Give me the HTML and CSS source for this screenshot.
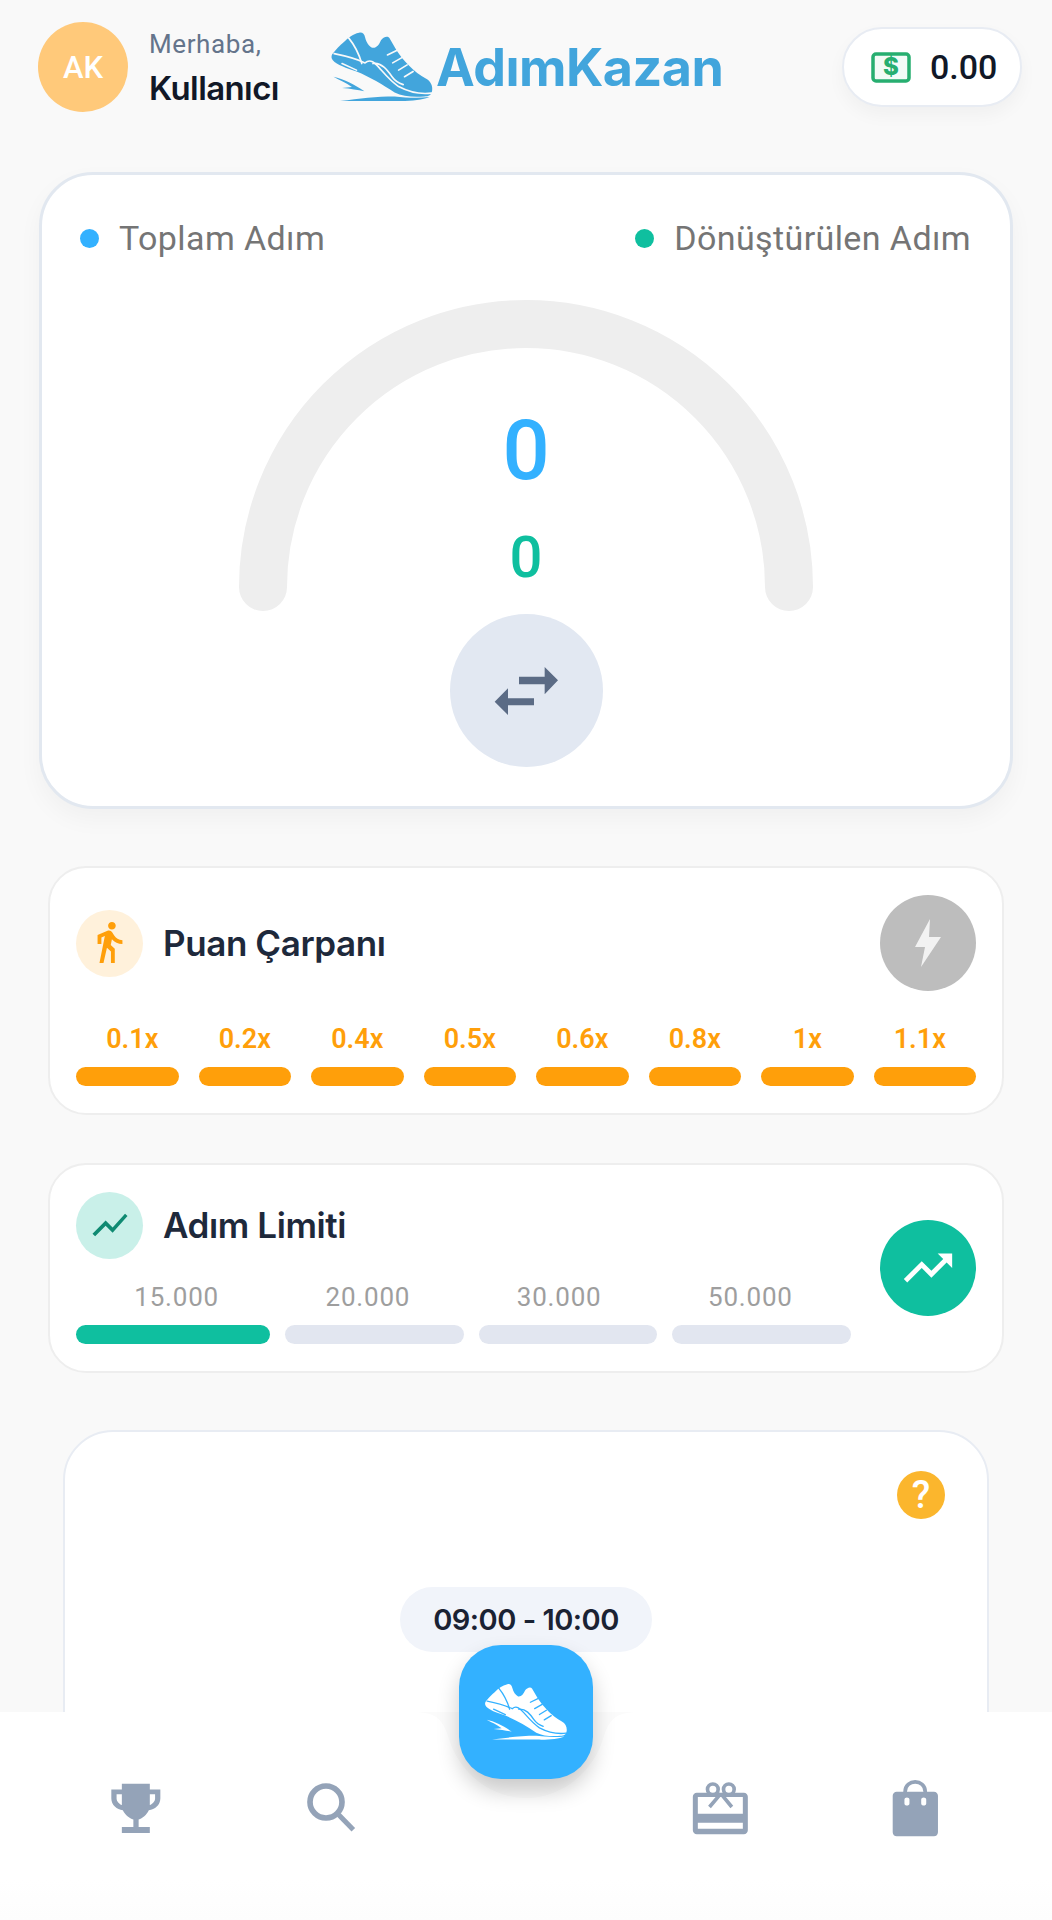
FILE: index.html
```html
<!DOCTYPE html>
<html lang="tr">
<head>
  <title>AdımKazan</title>
  <meta name="viewport" content="width=device-width, initial-scale=1">
  <link rel="stylesheet" href="styles.css">
</head>
<body>
  <svg class="defs" width="0" height="0">
    <symbol id="shoe" viewBox="30 30 315 225">
      <path class="shoe-body" d="M36 104 C48 88 60 76 70 68 C84 54 98 42 118 38 C128 36 134 42 136 52 C140 68 148 80 158 84 C170 86 178 76 184 62 C190 52 204 46 210 54 L232 92 C252 122 284 158 322 178 C336 186 342 200 340 214 C338 228 330 232 316 232 C280 234 250 232 226 220 C190 196 150 172 110 156 C80 146 50 136 38 122 C33 116 33 110 36 104 Z"/>
      <path class="shoe-body" d="M40 172 C70 178 104 196 134 216 C114 212 92 208 66 206 L96 203 C78 190 58 182 40 172 Z"/>
      <path class="shoe-body" d="M60 246 C120 238 170 232 226 232 C260 236 296 238 332 234 C310 244 270 247 230 246 C170 245 110 246 60 246 Z"/>
      <g class="shoe-seam">
        <path d="M86 54 C104 76 118 104 126 132"/>
        <path d="M42 102 C72 108 110 118 136 130 C152 116 166 130 180 146 C196 164 214 186 238 202 C268 218 304 226 338 222"/>
        <path d="M66 132 L110 152"/>
        <path d="M160 132 C186 128 204 152 218 172 C228 186 240 192 252 196"/>
        <path d="M204 106 L232 92"/>
        <path d="M220 130 L248 114"/>
        <path d="M238 152 L264 136"/>
        <path d="M256 172 L282 156"/>
      </g>
    </symbol>
  </svg>

  <div class="page">
    <header class="topbar">
      <div class="avatar">AK</div>
      <div class="greet">
        <div class="greet-hi">Merhaba,</div>
        <div class="greet-name">Kullanıcı</div>
      </div>
      <div class="brand">
        <svg class="brand-shoe" width="104" height="74"><use href="#shoe"/></svg>
        <span class="brand-name">AdımKazan</span>
      </div>
      <div class="wallet">
        <svg class="wallet-icon" width="40" height="31" viewBox="0 0 40 31">
          <rect x="2" y="2" width="36" height="27" rx="3" fill="#f3fbf7" stroke="#27ae70" stroke-width="3.500"/>
          <text x="20" y="23" text-anchor="middle" class="wallet-sign">$</text>
        </svg>
        <span class="wallet-value">0.00</span>
      </div>
    </header>

    <section class="steps-card">
      <div class="legend">
        <div class="legend-item"><span class="dot dot-blue"></span>Toplam Adım</div>
        <div class="legend-item"><span class="dot dot-green"></span>Dönüştürülen Adım</div>
      </div>
      <div class="gauge">
        <svg width="574" height="311" viewBox="0 0 574 311">
          <path d="M24 287 A263 263 0 0 1 550 287" fill="none" stroke="#eeeeee" stroke-width="48" stroke-linecap="round"/>
        </svg>
        <div class="gauge-total">0</div>
        <div class="gauge-converted">0</div>
      </div>
      <button class="convert-btn">
        <svg width="65" height="50" viewBox="40 45 195 150">
          <g fill="#5b6b85">
            <path d="M115 77 H192 V48 L232 88 L192 130 V100 H115 Z"/>
            <path d="M160 142 H82 V112 L42 152 L82 192 V163 H160 Z"/>
          </g>
        </svg>
      </button>
    </section>

    <section class="panel">
      <div class="panel-head">
        <div class="panel-title-wrap">
          <span class="panel-icon icon-orange">
            <svg width="36" height="44" viewBox="5 1 15 23"><path fill="#ff9f0a" d="M13.5 5.5c1.1 0 2-.9 2-2s-.9-2-2-2-2 .9-2 2 .9 2 2 2zM9.8 8.9L7 23h2.1l1.8-8 2.1 2v6h2v-7.5l-2.1-2 .6-3C14.8 12 16.8 13 19 13v-2c-1.9 0-3.5-1-4.3-2.4l-1-1.6c-.4-.6-1-1-1.7-1-.3 0-.5.1-.8.1L6 8.3V13h2V9.6l1.8-.7"/></svg>
          </span>
          <h2 class="panel-title">Puan Çarpanı</h2>
        </div>
        <span class="round-btn round-grey">
          <svg width="30" height="50" viewBox="0 0 30 50"><path fill="#f2f2f2" d="M17 1 L2 29 H12 L8 49 L28 19 H16 Z"/></svg>
        </span>
      </div>
      <div class="multipliers">
        <div class="mult"><span class="mult-label">0.1x</span><span class="mult-bar"></span></div>
        <div class="mult"><span class="mult-label">0.2x</span><span class="mult-bar"></span></div>
        <div class="mult"><span class="mult-label">0.4x</span><span class="mult-bar"></span></div>
        <div class="mult"><span class="mult-label">0.5x</span><span class="mult-bar"></span></div>
        <div class="mult"><span class="mult-label">0.6x</span><span class="mult-bar"></span></div>
        <div class="mult"><span class="mult-label">0.8x</span><span class="mult-bar"></span></div>
        <div class="mult"><span class="mult-label">1x</span><span class="mult-bar"></span></div>
        <div class="mult"><span class="mult-label">1.1x</span><span class="mult-bar"></span></div>
      </div>
    </section>

    <section class="panel panel-limit">
      <div class="limit-main">
        <div class="panel-title-wrap">
          <span class="panel-icon icon-teal">
            <svg width="42" height="42" viewBox="0 0 24 24"><path fill="#0f8a72" d="M3.5 18.49l6-6.01 4 4L22 6.92l-1.41-1.41-7.09 7.97-4-4L2 16.99z"/></svg>
          </span>
          <h2 class="panel-title">Adım Limiti</h2>
        </div>
        <div class="limit-labels">
          <span>15.000</span><span>20.000</span><span>30.000</span><span>50.000</span>
        </div>
        <div class="limit-bars">
          <span class="limit-bar limit-bar-on"></span>
          <span class="limit-bar"></span>
          <span class="limit-bar"></span>
          <span class="limit-bar"></span>
        </div>
      </div>
      <span class="round-btn round-green">
        <svg width="58" height="58" viewBox="0 0 24 24"><path fill="#fff" d="M16 6l2.29 2.29-4.88 4.88-4-4L2 16.59 3.41 18l6-6 4 4 6.3-6.29L22 12V6z"/></svg>
      </span>
    </section>

    <section class="slot-card">
      <div class="slot-top"><span class="help">?</span></div>
      <div class="slot-time">09:00 - 10:00</div>
    </section>
  </div>

  <nav class="bottom-nav">
    <svg class="nav-notch" width="228" height="86" viewBox="0 0 228 86"><path fill="#fbfbfb" d="M0 0 H228 C205 0 198 6 192 24 C182 60 150 86 114 86 C78 86 46 60 36 24 C30 6 23 0 0 0 Z"/></svg>
    <button class="fab">
      <svg class="fab-shoe" width="86" height="60"><use href="#shoe"/></svg>
    </button>
    <div class="nav-items">
      <span class="nav-item">
        <svg width="52" height="51" viewBox="45 38 156 155"><path fill="#94a3b8" fill-rule="evenodd" d="M80 40 H165 V58 H197 V85 C197 105 180 118 162 121 C155 135 143 146 131 149 V172 H165 V190 H80 V172 H115 V149 C103 146 90 135 83 121 C65 118 48 105 48 85 V58 H80 Z M64 72 V85 C64 94 72 102 80 105 V72 Z M181 72 H165 V105 C173 102 181 94 181 85 Z"/></svg>
      </span>
      <span class="nav-item">
        <svg width="50" height="50" viewBox="630 38 150 150" fill="none" stroke="#94a3b8"><circle cx="690" cy="95" r="48" stroke-width="17"/><path d="M728 133 L772 178" stroke-width="15"/></svg>
      </span>
      <span class="nav-item"></span>
      <span class="nav-item">
        <svg width="57" height="54" viewBox="38 30 170 162">
          <path fill="#94a3b8" fill-rule="evenodd" d="M52 65 H193 C200 65 205 70 205 77 V178 C205 185 200 190 193 190 H52 C45 190 40 185 40 178 V77 C40 70 45 65 52 65 Z M55 78 V128 H190 V78 Z M55 155 V173 H190 V155 Z"/>
          <g stroke="#94a3b8" stroke-width="11"><circle cx="100" cy="55" r="16" fill="#fff"/><circle cx="148" cy="55" r="16" fill="#fff"/><path fill="none" d="M124 68 L90 108 M124 68 L157 108"/></g>
        </svg>
      </span>
      <span class="nav-item">
        <svg width="47" height="57" viewBox="638 30 140 170">
          <path fill="none" stroke="#94a3b8" stroke-width="11" d="M677 75 V65 C677 26 737 26 737 65 V75"/>
          <path fill="#94a3b8" fill-rule="evenodd" d="M652 65 H763 C770 65 775 70 775 77 V186 C775 193 770 198 763 198 H652 C645 198 640 193 640 186 V77 C640 70 645 65 652 65 Z M675 88 V100 C675 108 690 108 690 100 V88 C690 80 675 80 675 88 Z M725 88 V100 C725 108 740 108 740 100 V88 C740 80 725 80 725 88 Z"/>
        </svg>
      </span>
    </div>
  </nav>
</body>
</html>
```

FILE: styles.css
```css
* {
  box-sizing: border-box;
}

html, body {
  margin: 0;
  padding: 0;
}

body {
  position: relative;
  width: 1052px;
  height: 1920px;
  overflow: hidden;
  background: #f9f9f9;
  font-family: Roboto, "Liberation Sans", sans-serif;
  color: #1a2233;
}

.defs {
  position: absolute;
}

/* top bar */
.topbar {
  display: flex;
  align-items: center;
  height: 134px;
  padding: 0 30px 0 38px;
}

.avatar {
  display: flex;
  align-items: center;
  justify-content: center;
  width: 90px;
  height: 90px;
  border-radius: 50%;
  background: #ffc97a;
  color: #fff;
  font-size: 31px;
  font-weight: 500;
}

.greet {
  margin-left: 21px;
  width: 132px;
}

.greet-hi {
  font-size: 26px;
  line-height: 36px;
  letter-spacing: 0.6px;
  color: #64748b;
}

.greet-name {
  margin-top: 6px;
  font-family: Inter, sans-serif;
  font-size: 33px;
  line-height: 40px;
  font-weight: 600;
  color: #111827;
  letter-spacing: -0.6px;
}

.brand {
  display: flex;
  align-items: center;
  margin-left: 49px;
}

.brand-shoe {
  --shoe-fill: #42a5dc;
  --shoe-seam: #f9f9f9;
}

.brand-name {
  margin-left: 2px;
  font-family: Inter, sans-serif;
  font-size: 52px;
  font-weight: 700;
  letter-spacing: -0.5px;
  color: #42a5dc;
}

.shoe-body {
  fill: var(--shoe-fill);
}

.shoe-seam {
  fill: none;
  stroke: var(--shoe-seam);
  stroke-width: 5;
  stroke-linecap: round;
}

.wallet {
  display: flex;
  align-items: center;
  gap: 19px;
  width: 180px;
  height: 80px;
  margin-left: auto;
  padding-left: 27px;
  background: #fff;
  border: 2px solid #e8ecf3;
  border-radius: 40px;
  box-shadow: 0 8px 18px rgba(0, 0, 0, 0.04);
}

.wallet-sign {
  font-family: Inter, sans-serif;
  font-size: 24px;
  font-weight: 800;
  fill: #27ae70;
}

.wallet-value {
  font-size: 34px;
  font-weight: 500;
  color: #111827;
}

/* steps card */
.steps-card {
  display: flex;
  flex-direction: column;
  align-items: center;
  height: 637px;
  margin: 38px 39px 0;
  padding-top: 43px;
  background: #fff;
  border: 3px solid #e2e8f0;
  border-radius: 54px;
  box-shadow: 0 10px 24px rgba(0, 0, 0, 0.04);
}

.legend {
  display: flex;
  justify-content: space-between;
  width: 100%;
  padding: 0 39px 0 38px;
}

.legend-item {
  display: flex;
  align-items: center;
  gap: 20px;
  height: 40px;
  font-size: 34px;
  letter-spacing: 0.4px;
  color: #757575;
}

.dot {
  width: 19px;
  height: 19px;
  border-radius: 50%;
}

.dot-blue {
  background: #33b1ff;
}

.dot-green {
  background: #0fbf9f;
}

.gauge {
  position: relative;
  width: 574px;
  height: 311px;
  margin-top: 42px;
}

.gauge svg {
  display: block;
}

.gauge-total,
.gauge-converted {
  position: absolute;
  left: 0;
  right: 0;
  text-align: center;
  font-weight: 500;
}

.gauge-total {
  top: 103px;
  font-size: 83px;
  line-height: 96px;
  color: #33b1ff;
}

.gauge-converted {
  top: 223px;
  font-size: 58px;
  line-height: 68px;
  color: #0fbf9f;
}

.convert-btn {
  display: flex;
  align-items: center;
  justify-content: center;
  width: 153px;
  height: 153px;
  margin-top: 3px;
  padding: 0;
  border: none;
  border-radius: 50%;
  background: #e2e8f2;
}

/* panels */
.panel {
  height: 249px;
  margin: 57px 48px 0;
  padding: 27px 26px 0;
  background: #fff;
  border: 2px solid #eeeeee;
  border-radius: 38px;
}

.panel-head {
  display: flex;
  align-items: center;
  justify-content: space-between;
}

.panel-title-wrap {
  display: flex;
  align-items: center;
  gap: 20px;
}

.panel-icon {
  display: flex;
  align-items: center;
  justify-content: center;
  width: 67px;
  height: 67px;
  border-radius: 50%;
}

.icon-orange {
  background: #fff1db;
}

.icon-teal {
  background: #c9f0e9;
}

.panel-title {
  margin: 0;
  font-family: Inter, sans-serif;
  font-size: 35px;
  font-weight: 600;
  letter-spacing: -0.4px;
  color: #1e293b;
}

.round-btn {
  display: flex;
  flex: none;
  align-items: center;
  justify-content: center;
  width: 96px;
  height: 96px;
  border-radius: 50%;
}

.round-grey {
  background: #bdbdbd;
}

.round-green {
  background: #0fbf9f;
}

.multipliers {
  display: grid;
  grid-template-columns: repeat(8, 1fr);
  margin-top: 32px;
}

.mult {
  display: flex;
  flex-direction: column;
  align-items: center;
  gap: 12px;
}

.mult-label {
  font-size: 27px;
  line-height: 32px;
  font-weight: 600;
  color: #ff9f0a;
}

.mult-bar {
  align-self: stretch;
  height: 19px;
  margin: 0 10px;
  border-radius: 10px;
  background: #ff9f0a;
}

.mult:first-child .mult-bar {
  margin-left: 0;
}

.mult:last-child .mult-bar {
  margin-right: 0;
}

.panel-limit {
  display: flex;
  align-items: center;
  gap: 29px;
  height: 210px;
  margin-top: 48px;
  padding: 0 26px 1px;
}

.limit-main {
  flex: 1;
}

.limit-labels {
  display: grid;
  grid-template-columns: repeat(4, 1fr);
  margin-top: 23px;
  padding: 0 5px;
  text-align: center;
  font-size: 26px;
  line-height: 30px;
  letter-spacing: 0.8px;
  color: #9e9e9e;
}

.limit-bars {
  display: grid;
  grid-template-columns: repeat(4, 1fr);
  margin-top: 13px;
}

.limit-bar {
  height: 19px;
  margin-left: 15px;
  border-radius: 10px;
  background: #e2e6f0;
}

.limit-bar-on {
  margin-left: 0;
  background: #0fbf9f;
}

/* time slot card */
.slot-card {
  display: flex;
  flex-direction: column;
  align-items: center;
  height: 480px;
  margin: 57px 63px 0;
  padding-top: 39px;
  background: #fff;
  border: 2px solid #e8ecf3;
  border-radius: 50px;
}

.slot-top {
  display: flex;
  justify-content: flex-end;
  width: 100%;
  padding-right: 42px;
}

.help {
  display: flex;
  align-items: center;
  justify-content: center;
  width: 48px;
  height: 48px;
  border-radius: 50%;
  background: #fbb62d;
  color: #fff;
  font-size: 38px;
  font-weight: 500;
}

.slot-time {
  display: flex;
  align-items: center;
  justify-content: center;
  width: 252px;
  height: 65px;
  margin-top: 68px;
  border-radius: 33px;
  background: #f1f4fa;
  font-family: Inter, sans-serif;
  font-size: 29px;
  font-weight: 600;
  letter-spacing: -0.5px;
  color: #1a2233;
}

/* bottom nav */
.bottom-nav {
  position: absolute;
  top: 1712px;
  left: 0;
  right: 0;
  height: 208px;
  background: linear-gradient(#ffffff 80%, #fdfdfd);
}

.nav-notch {
  position: absolute;
  top: 0;
  left: 412px;
}

.fab {
  position: absolute;
  top: -67px;
  left: 459px;
  display: flex;
  align-items: center;
  justify-content: center;
  width: 134px;
  height: 134px;
  padding: 0;
  border: none;
  border-radius: 42px;
  background: #33b1ff;
  box-shadow: 0 12px 22px rgba(0, 0, 0, 0.2);
}

.fab-shoe {
  --shoe-fill: #ffffff;
  --shoe-seam: #33b1ff;
}

.nav-items {
  display: grid;
  grid-template-columns: repeat(5, 195px);
  padding: 66px 38px 0;
}

.nav-item {
  display: flex;
  align-items: center;
  justify-content: center;
  height: 60px;
}
```
